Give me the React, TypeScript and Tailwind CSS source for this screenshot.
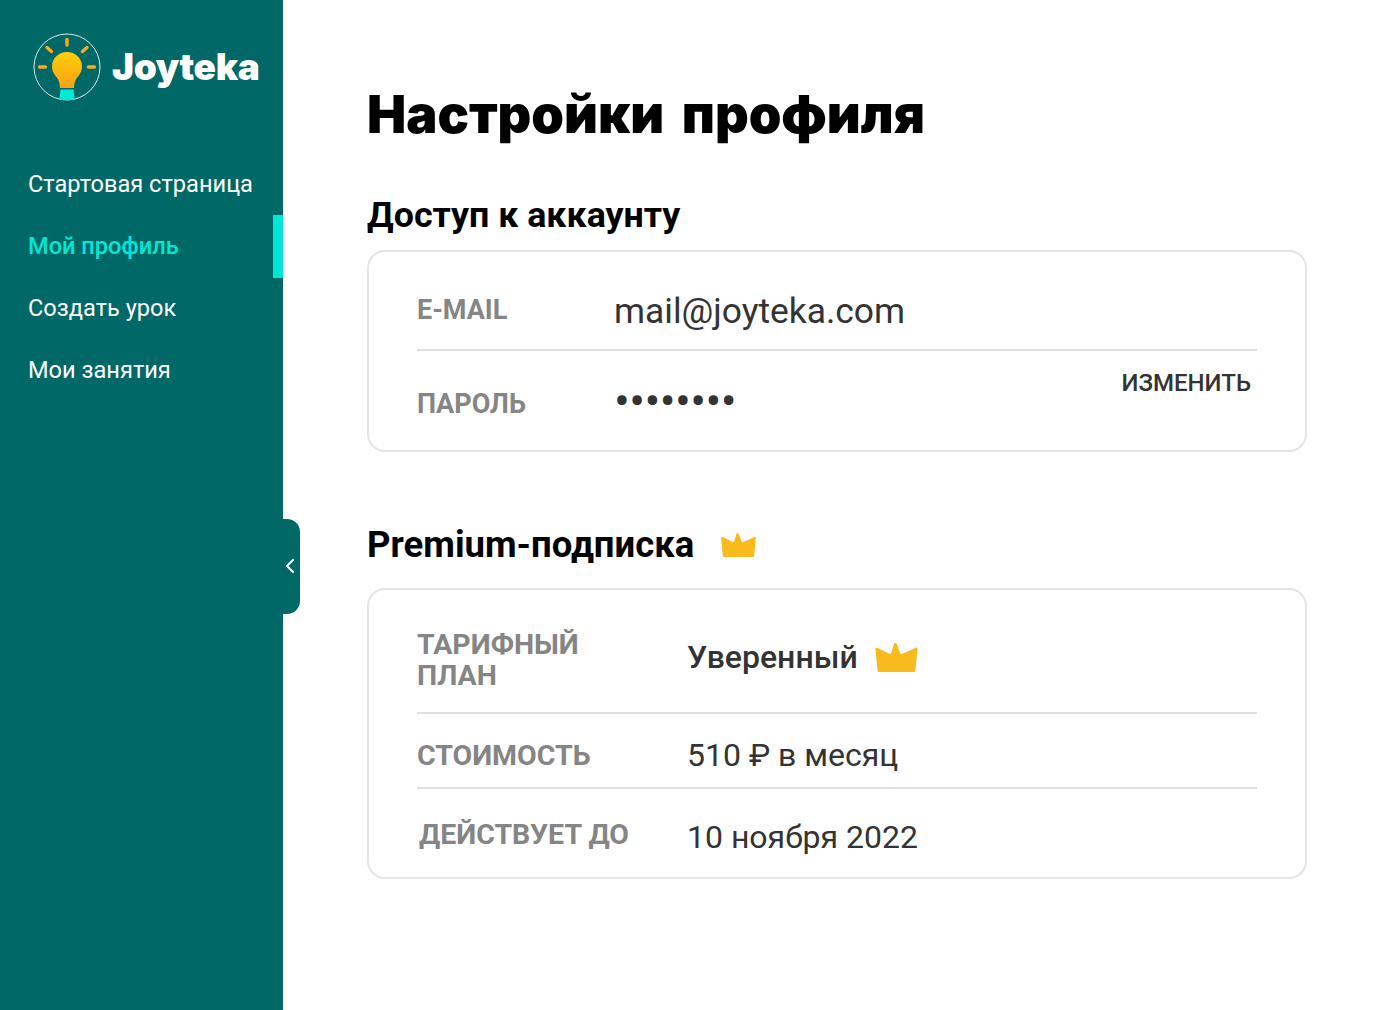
import { ChevronLeft } from "lucide-react";

const navItems = [
  { label: "Стартовая страница", active: false },
  { label: "Мой профиль", active: true },
  { label: "Создать урок", active: false },
  { label: "Мои занятия", active: false },
];

function Logo() {
  return (
    <svg width="70" height="70" viewBox="0 0 70 70" fill="none" className="shrink-0">
      <defs>
        <linearGradient id="bulb" x1="0" y1="0" x2="0" y2="1">
          <stop offset="0" stopColor="#ffcf03" />
          <stop offset="1" stopColor="#f9a11b" />
        </linearGradient>
      </defs>
      <circle cx="35" cy="35" r="33" stroke="#fff" strokeOpacity="0.85" strokeWidth="1" />
      <path
        d="M35 20c-8.300 0-15 6.300-15 14.200 0 5.200 2.500 8.600 5 11.600 1.800 2.200 2.700 5.200 3 10.200h14c.3-5 1.200-8 3-10.200 2.500-3 5-6.400 5-11.600C50 26.300 43.300 20 35 20z"
        fill="url(#bulb)"
      />
      <path d="M28.500 57.500h13l1 8.800c0 1-.8 1.700-1.700 1.700h-11.600c-.9 0-1.700-.7-1.700-1.700z" fill="#03e9d8" />
      <g stroke="#fbab17" strokeWidth="3.400" strokeLinecap="round">
        <path d="M35 7.500v5.500" />
        <path d="M15 15.500l4.500 4" />
        <path d="M55 15.500l-4.500 4" />
        <path d="M7.500 35H13.500" />
        <path d="M56.500 35H62.500" />
      </g>
    </svg>
  );
}

function Crown({ className }: { className: string }) {
  return (
    <svg viewBox="-4 -4 135 93" className={className}>
      <path
        d="M0 15L47 38L60 0L75 38L127 15L120 85H7z"
        fill="#f8ba1c"
        stroke="#f8ba1c"
        strokeWidth="8"
        strokeLinejoin="round"
      />
    </svg>
  );
}

export default function App() {
  return (
    <div className="flex min-h-[1010px] bg-white font-['Roboto',sans-serif]">
      <aside className="relative w-[283px] shrink-0 bg-[#006866]">
        <div className="flex items-center gap-[10px] pl-[32px] pt-[32px]">
          <Logo />
          <span className="font-['Inter',sans-serif] text-[37px] leading-[70px] font-black tracking-[-0.4px] text-white">
            Joyteka
          </span>
        </div>
        <nav className="mt-[51px]">
          {navItems.map((item) => (
            <div
              key={item.label}
              className={
                item.active
                  ? "flex h-[63px] -mb-[1px] items-center border-r-[10px] border-[#00e8d5] pl-[28px] text-[23.6px] font-medium text-[#00e8d5]"
                  : "flex h-[62px] items-center pl-[28px] pt-[1px] text-[23.6px] text-white"
              }
            >
              {item.label}
            </div>
          ))}
        </nav>
        <button className="absolute left-[283px] top-[519px] flex h-[95px] w-[17px] items-center justify-center rounded-r-[13px] bg-[#006866] pb-[2px] text-white">
          <ChevronLeft size={24} strokeWidth={2} className="-ml-[3px] shrink-0" />
        </button>
      </aside>

      <main className="w-[940px] ml-[84px] pt-[82px]">
        <h1 className="font-['Inter',sans-serif] text-[52.300px] leading-[64px] font-black text-black [word-spacing:7px]">
          Настройки профиля
        </h1>

        <h2 className="mt-[46px] text-[35.800px] leading-[46px] font-bold text-black">Доступ к аккаунту</h2>
        <section className="mt-[12px] h-[202px] rounded-[18px] border-2 border-[#e5e5e5] px-[48px]">
          <div className="flex h-[99px] items-center border-b-2 border-[#e0e0e0] pt-[20px]">
            <div className="w-[197px] text-[27px] leading-[31px] font-bold text-[#858585]">E-MAIL</div>
            <div className="text-[35.400px] leading-[42px] text-[#333333]">mail@joyteka.com</div>
          </div>
          <div className="flex items-start pt-[38px]">
            <div className="w-[197px] text-[27px] leading-[31px] font-bold text-[#858585]">ПАРОЛЬ</div>
            <div className="flex-1 -mt-[3px] text-[47px] leading-[30px] tracking-[-0.6px] text-[#333333]">••••••••</div>
            <button className="mr-[6px] -mt-[21px] text-[24px] leading-[30px] font-medium text-[#333333]">ИЗМЕНИТЬ</button>
          </div>
        </section>

        <div className="mt-[70px] flex items-center gap-[26px]">
          <h2 className="text-[36.500px] leading-[46px] font-bold text-black">Premium-подписка</h2>
          <Crown className="h-[24px] w-[37px]" />
        </div>
        <section className="mt-[20px] h-[291px] rounded-[18px] border-2 border-[#e5e5e5] px-[48px] text-[#333333]">
          <div className="flex h-[124px] items-center border-b-2 border-[#e0e0e0] pt-[8px]">
            <div className="w-[270px] pt-[10px] text-[28.500px] leading-[31px] font-bold text-[#858585]">
              ТАРИФНЫЙ
              <br />
              ПЛАН
            </div>
            <div className="pt-[4px] text-[32px] leading-[40px] font-medium">Уверенный</div>
            <Crown className="ml-[17px] mt-[4px] h-[29px] w-[43px]" />
          </div>
          <div className="flex h-[75px] items-center border-b-2 border-[#e0e0e0] pt-[10px]">
            <div className="w-[270px] text-[28.500px] leading-[31px] font-bold text-[#858585]">СТОИМОСТЬ</div>
            <div className="-mt-[2px] text-[32px] leading-[40px]">510 ₽ в месяц</div>
          </div>
          <div className="flex h-[88px] items-center">
            <div className="w-[270px] pl-[2px] pt-[2px] text-[28.500px] leading-[31px] font-bold text-[#858585]">
              ДЕЙСТВУЕТ ДО
            </div>
            <div className="pt-[8px] text-[32px] leading-[40px]">10 ноября 2022</div>
          </div>
        </section>
      </main>
    </div>
  );
}
